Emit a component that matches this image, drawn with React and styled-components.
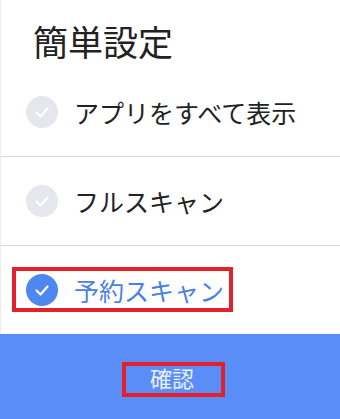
import React from 'react';
import styled, { createGlobalStyle } from 'styled-components';

const Global = createGlobalStyle`
  html, body { margin: 0; padding: 0; background: #ffffff; }
  body { font-family: "Noto Sans CJK JP", "Noto Sans", sans-serif; }
`;

const Page = styled.div`
  width: 340px;
  height: 419px;
  display: flex;
  flex-direction: column;
  overflow: hidden;
`;

const Panel = styled.div`
  display: flex;
  flex-direction: column;
  border-left: 1px solid #ededed;
`;

const Title = styled.h1`
  margin: 0;
  height: 68px;
  box-sizing: border-box;
  padding: 16px 0 0 32px;
  font-size: 35px;
  line-height: 50px;
  font-weight: 400;
  color: #222222;
`;

const Row = styled.div`
  height: 88px;
  display: flex;
  align-items: center;
  padding-left: 25px;
  border-bottom: ${(p) => (p.$last ? 'none' : '1px solid #d6d6d6')};
`;

const Item = styled.div`
  position: relative;
  display: inline-flex;
  align-items: center;
  gap: 16px;
  &::after {
    content: ${(p) => (p.$highlight ? "''" : 'none')};
    position: absolute;
    top: -7px;
    bottom: -6px;
    left: -14px;
    right: -9px;
    border: 4px solid #e2212b;
  }
`;

const Label = styled.span`
  font-size: 25px;
  line-height: 32px;
  color: ${(p) => (p.$active ? '#4a80e6' : '#222222')};
`;

const Footer = styled.div`
  height: 85px;
  background: #5a8df5;
  display: flex;
  justify-content: center;
  align-items: center;
`;

const ConfirmBox = styled.div`
  margin: 6px 0 0 7px;
  width: 103px;
  height: 35px;
  box-sizing: border-box;
  border: 4px solid #e2212b;
  display: flex;
  justify-content: center;
  align-items: center;
  padding: 0 3px 5px 0;
  color: #e9effd;
  font-size: 22px;
  line-height: 1;
`;

function Check({ active }) {
  return (
    <svg width="32" height="32" viewBox="0 0 32 32">
      <circle cx="16" cy="16" r="16" fill={active ? '#4d87f0' : '#e5e7ed'} />
      <polyline
        points="10.5,16.5 14.5,20.5 21.5,12.5"
        fill="none"
        stroke="#ffffff"
        strokeWidth="2.2"
        strokeLinecap="round"
        strokeLinejoin="round"
      />
    </svg>
  );
}

const options = [
  { label: 'アプリをすべて表示', active: false },
  { label: 'フルスキャン', active: false },
  { label: '予約スキャン', active: true },
];

export default function App() {
  return (
    <Page>
      <Global />
      <Panel>
        <Title>簡単設定</Title>
        {options.map((o, i) => (
          <Row key={o.label} $last={i === options.length - 1}>
            <Item $highlight={o.active}>
              <Check active={o.active} />
              <Label $active={o.active}>{o.label}</Label>
            </Item>
          </Row>
        ))}
      </Panel>
      <Footer>
        <ConfirmBox>確認</ConfirmBox>
      </Footer>
    </Page>
  );
}
